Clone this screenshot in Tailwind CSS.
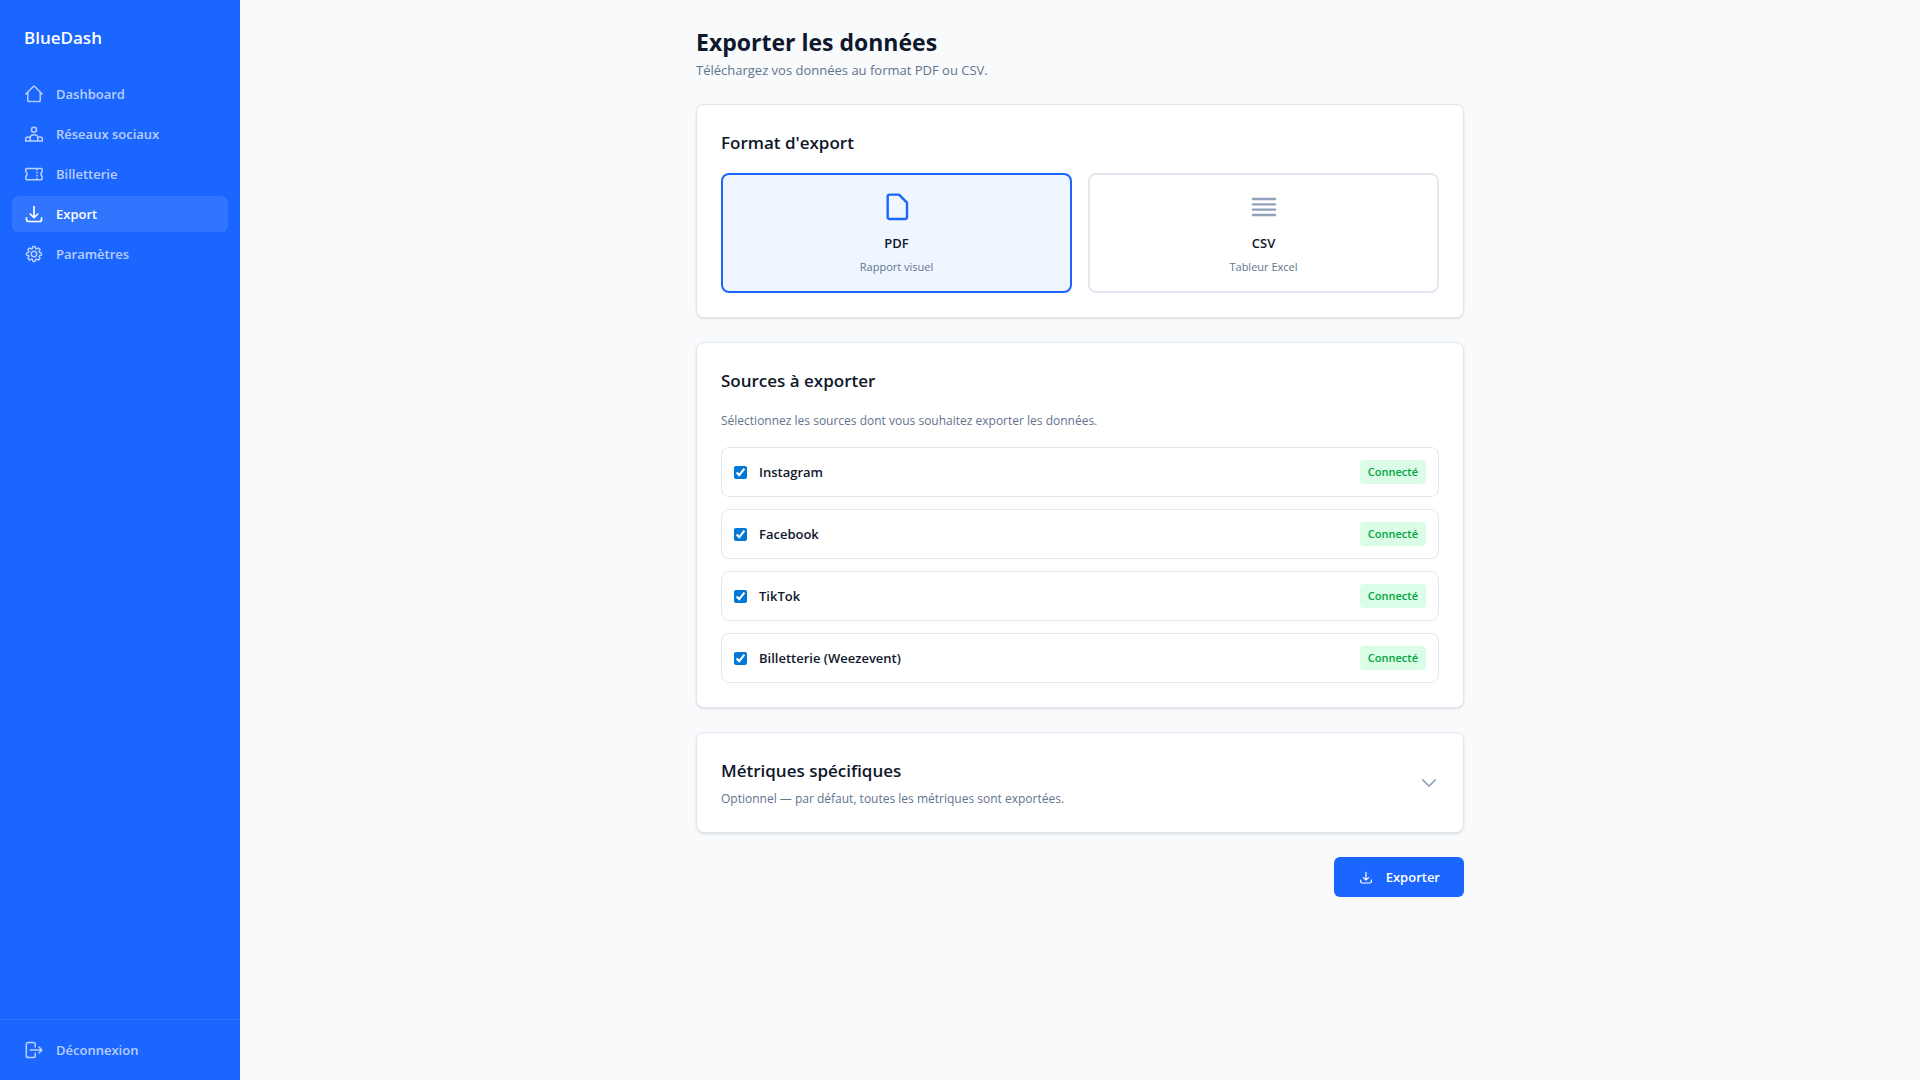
<!DOCTYPE html>
<html lang="fr">
<head>
    <meta charset="UTF-8">
    <meta name="viewport" content="width=device-width, initial-scale=1.0">
    <title>BlueDash - Exporter les données</title>
    <script src="https://cdn.jsdelivr.net/npm/@tailwindcss/browser@4"></script>
</head>
<body class="flex min-h-screen bg-slate-50 font-['Segoe_UI','Open_Sans','Noto_Sans',sans-serif] text-slate-900">

    <!-- Sidebar -->
    <aside class="flex w-60 shrink-0 flex-col bg-[#1a66ff] text-[13px] leading-5 font-semibold text-white/70">
        <div class="p-6 text-[17px] leading-7 text-white">BlueDash</div>
        <nav class="flex flex-1 flex-col gap-1 px-3">
            <a href="#" class="flex h-9 items-center gap-3 rounded-md px-3 hover:bg-white/10">
                <svg class="size-5" viewBox="0 0 24 24" fill="none" stroke="currentColor" stroke-width="1.8" stroke-linecap="round" stroke-linejoin="round"><path d="m2.25 12 8.954-8.955c.44-.439 1.152-.439 1.591 0L21.75 12M4.5 9.75v10.125c0 .621.504 1.125 1.125 1.125H8.75M10.75 21h3.5M16 21h2.375c.621 0 1.125-.504 1.125-1.125V9.75"/></svg>
                Dashboard
            </a>
            <a href="#" class="flex h-9 items-center gap-3 rounded-md px-3 hover:bg-white/10">
                <svg class="size-5" viewBox="0 0 24 24" fill="none" stroke="currentColor" stroke-width="1.8" stroke-linecap="round" stroke-linejoin="round"><circle cx="12" cy="6.75" r="3"/><path d="M7.5 20.25V16.5c0-2.1 2-3.5 4.5-3.5s4.5 1.4 4.5 3.5v3.75M2 20.25h20M2 20.25v-2.5c0-1.5 1.2-2.25 2.75-2.25s2.75.5 2.75 1.5M22 20.25v-2.5c0-1.5-1.2-2.25-2.75-2.25s-2.75.5-2.75 1.5"/></svg>
                Réseaux sociaux
            </a>
            <a href="#" class="flex h-9 items-center gap-3 rounded-md px-3 hover:bg-white/10">
                <svg class="size-5" viewBox="0 0 24 24" fill="none" stroke="currentColor" stroke-width="1.8" stroke-linecap="round" stroke-linejoin="round"><path d="M15.5 6v.75m0 3v.75m0 3v.75m0 3V18M3.375 5.25c-.621 0-1.125.504-1.125 1.125v3.026a2.999 2.999 0 0 1 0 5.198v3.026c0 .621.504 1.125 1.125 1.125h17.25c.621 0 1.125-.504 1.125-1.125v-3.026a2.999 2.999 0 0 1 0-5.198V6.375c0-.621-.504-1.125-1.125-1.125H3.375Z"/></svg>
                Billetterie
            </a>
            <a href="#" aria-current="page" class="flex h-9 items-center gap-3 rounded-md bg-white/10 px-3 text-white">
                <svg class="size-5" viewBox="0 0 24 24" fill="none" stroke="currentColor" stroke-width="2" stroke-linecap="round" stroke-linejoin="round"><path d="M3 16.5v2.25A2.25 2.25 0 0 0 5.25 21h13.5A2.25 2.25 0 0 0 21 18.75V16.5M16.5 12 12 16.5m0 0L7.5 12m4.5 4.5V3"/></svg>
                Export
            </a>
            <a href="#" class="flex h-9 items-center gap-3 rounded-md px-3 hover:bg-white/10">
                <svg class="size-5" viewBox="0 0 24 24" fill="none" stroke="currentColor" stroke-width="1.8" stroke-linecap="round" stroke-linejoin="round"><path d="M10.343 3.94c.09-.542.56-.94 1.11-.94h1.093c.55 0 1.02.398 1.11.94l.149.894c.07.424.384.764.78.93.398.164.855.142 1.205-.108l.737-.527a1.125 1.125 0 0 1 1.45.12l.773.774c.39.389.44 1.002.12 1.45l-.527.737c-.25.35-.272.806-.107 1.204.165.397.505.71.93.78l.893.15c.543.09.94.559.94 1.109v1.094c0 .55-.397 1.02-.94 1.11l-.894.149c-.424.07-.764.383-.929.78-.165.398-.143.854.107 1.204l.527.738c.32.447.269 1.06-.12 1.45l-.774.773a1.125 1.125 0 0 1-1.449.12l-.738-.527c-.35-.25-.806-.272-1.203-.107-.398.165-.71.505-.781.929l-.149.894c-.09.542-.56.94-1.11.94h-1.094c-.55 0-1.019-.398-1.11-.94l-.148-.894c-.071-.424-.384-.764-.781-.93-.398-.164-.854-.142-1.204.108l-.738.527c-.447.32-1.06.269-1.45-.12l-.773-.774a1.125 1.125 0 0 1-.12-1.45l.527-.737c.25-.35.272-.806.108-1.204-.165-.397-.506-.71-.93-.78l-.894-.15c-.542-.09-.94-.56-.94-1.109v-1.094c0-.55.398-1.02.94-1.11l.894-.149c.424-.07.765-.383.93-.78.165-.398.143-.854-.108-1.204l-.526-.738a1.125 1.125 0 0 1 .12-1.45l.773-.773a1.125 1.125 0 0 1 1.45-.12l.737.527c.35.25.807.272 1.204.107.397-.165.71-.505.78-.929l.15-.894Z"/><circle cx="12" cy="12" r="3.25"/></svg>
                Paramètres
            </a>
        </nav>
        <div class="border-t border-white/10 p-3">
            <button type="button" class="flex h-9 w-full cursor-pointer items-center gap-3 rounded-md px-3 hover:bg-white/10">
                <svg class="size-5" viewBox="0 0 24 24" fill="none" stroke="currentColor" stroke-width="1.8" stroke-linecap="round" stroke-linejoin="round"><path d="M13.5 8.5V5.25A2.25 2.25 0 0 0 11.25 3H5A2.25 2.25 0 0 0 2.75 5.25v13.5A2.25 2.25 0 0 0 5 21h6.25a2.25 2.25 0 0 0 2.25-2.25V15.5M18 15.5l3.5-3.5L18 8.5M21.5 12H7.5"/></svg>
                Déconnexion
            </button>
        </div>
    </aside>

    <!-- Contenu -->
    <main class="flex-1 p-6">
        <div class="mx-auto flex max-w-3xl flex-col gap-6">
            <header>
                <h1 class="text-[23px] leading-9 font-bold">Exporter les données</h1>
                <p class="text-[13px] leading-5 text-slate-500">Téléchargez vos données au format PDF ou CSV.</p>
            </header>

            <!-- Format -->
            <section class="rounded-lg border border-slate-200 bg-white p-6 shadow-sm">
                <h2 class="text-[17px] leading-7 font-semibold">Format d'export</h2>
                <div class="mt-4 grid grid-cols-2 gap-4">
                    <button type="button" aria-pressed="true" class="flex cursor-pointer flex-col items-center rounded-lg border-2 border-[#1a66ff] bg-[#eff6ff] p-4">
                        <svg class="size-8 text-[#1a66ff]" viewBox="0 0 24 24" fill="none" stroke="currentColor" stroke-width="1.8" stroke-linecap="round" stroke-linejoin="round"><path d="M13.5 2.75H6.25A1.25 1.25 0 0 0 5 4v15.75A1.25 1.25 0 0 0 6.25 21h12a1.25 1.25 0 0 0 1.25-1.25V8.75Z"/></svg>
                        <span class="mt-2 text-[13px] leading-6 font-semibold">PDF</span>
                        <span class="mt-1 text-[11px] leading-4 text-slate-500">Rapport visuel</span>
                    </button>
                    <button type="button" aria-pressed="false" class="flex cursor-pointer flex-col items-center rounded-lg border-2 border-slate-200 p-4">
                        <svg class="size-8 text-slate-400" viewBox="0 0 24 24" fill="none" stroke="currentColor" stroke-width="1.8" stroke-linecap="round" stroke-linejoin="round"><path d="M3.75 6h16.5M3.75 10h16.5M3.75 14h16.5M3.75 18h16.5"/></svg>
                        <span class="mt-2 text-[13px] leading-6 font-semibold">CSV</span>
                        <span class="mt-1 text-[11px] leading-4 text-slate-500">Tableur Excel</span>
                    </button>
                </div>
            </section>

            <!-- Sources -->
            <section class="rounded-lg border border-slate-200 bg-white p-6 shadow-sm">
                <h2 class="text-[17px] leading-7 font-semibold">Sources à exporter</h2>
                <p class="mt-4 text-xs leading-5 text-slate-500">Sélectionnez les sources dont vous souhaitez exporter les données.</p>
                <div class="mt-4 flex flex-col gap-3">
                    <label class="flex cursor-pointer items-center gap-3 rounded-lg border border-slate-200 p-3">
                        <input type="checkbox" checked class="size-[13px] accent-[#0078d7]">
                        <span class="flex-1 text-[13px] leading-5 font-semibold">Instagram</span>
                        <span class="rounded bg-green-100 px-2 py-1 text-[11px] leading-4 font-semibold text-green-600">Connecté</span>
                    </label>
                    <label class="flex cursor-pointer items-center gap-3 rounded-lg border border-slate-200 p-3">
                        <input type="checkbox" checked class="size-[13px] accent-[#0078d7]">
                        <span class="flex-1 text-[13px] leading-5 font-semibold">Facebook</span>
                        <span class="rounded bg-green-100 px-2 py-1 text-[11px] leading-4 font-semibold text-green-600">Connecté</span>
                    </label>
                    <label class="flex cursor-pointer items-center gap-3 rounded-lg border border-slate-200 p-3">
                        <input type="checkbox" checked class="size-[13px] accent-[#0078d7]">
                        <span class="flex-1 text-[13px] leading-5 font-semibold">TikTok</span>
                        <span class="rounded bg-green-100 px-2 py-1 text-[11px] leading-4 font-semibold text-green-600">Connecté</span>
                    </label>
                    <label class="flex cursor-pointer items-center gap-3 rounded-lg border border-slate-200 p-3">
                        <input type="checkbox" checked class="size-[13px] accent-[#0078d7]">
                        <span class="flex-1 text-[13px] leading-5 font-semibold">Billetterie (Weezevent)</span>
                        <span class="rounded bg-green-100 px-2 py-1 text-[11px] leading-4 font-semibold text-green-600">Connecté</span>
                    </label>
                </div>
            </section>

            <!-- Métriques -->
            <section class="rounded-lg border border-slate-200 bg-white shadow-sm">
                <button type="button" aria-expanded="false" class="flex w-full cursor-pointer items-center justify-between p-6 text-left">
                    <span>
                        <span class="block text-[17px] leading-7 font-semibold">Métriques spécifiques</span>
                        <span class="mt-1 block text-xs leading-[19px] text-slate-500">Optionnel — par défaut, toutes les métriques sont exportées.</span>
                    </span>
                    <svg class="size-5 text-slate-400" viewBox="0 0 24 24" fill="none" stroke="currentColor" stroke-width="1.8" stroke-linecap="round" stroke-linejoin="round"><path d="m19.5 8.25-7.5 7.5-7.5-7.5"/></svg>
                </button>
            </section>

            <button type="button" class="flex h-10 cursor-pointer items-center gap-3 self-end rounded-md bg-[#1a66ff] px-6 text-[13px] leading-5 font-semibold text-white">
                <svg class="size-4" viewBox="0 0 24 24" fill="none" stroke="currentColor" stroke-width="1.8" stroke-linecap="round" stroke-linejoin="round"><path d="M4 16.5v2.25A2.25 2.25 0 0 0 6.25 21h11.500A2.25 2.25 0 0 0 20 18.75V16.5M16 13 12 16.5m0 0L8 13m4 3.500V5"/></svg>
                Exporter
            </button>
        </div>
    </main>

</body>
</html>
